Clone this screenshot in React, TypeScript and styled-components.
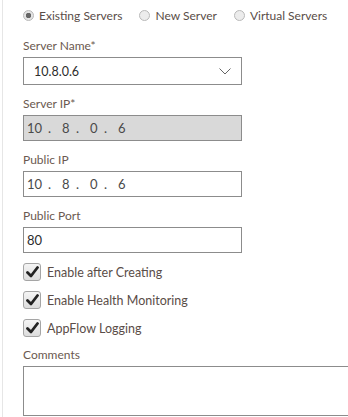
import React from 'react';
import styled, { createGlobalStyle } from 'styled-components';

const Global = createGlobalStyle`
  html, body { margin: 0; padding: 0; background: #fff; }
  body { font-family: Lato, "Open Sans", sans-serif; }
`;

const Page = styled.div`
  margin-left: 2px;
  border-left: 1px solid #e6e6e6;
  padding-left: 20px;
  height: 417px;
  box-sizing: border-box;
  overflow: hidden;
`;

const RadioRow = styled.div`
  display: flex;
  align-items: center;
  height: 30px;
  gap: 17px;
`;

const RadioItem = styled.label`
  display: flex;
  align-items: center;
  gap: 5px;
  font-size: 12px;
  color: #5a4d48;
`;

const RadioDot = styled.span<{ checked?: boolean }>`
  width: 11px;
  height: 11px;
  border-radius: 50%;
  border: 1px solid #b8b8b8;
  background: radial-gradient(circle, ${p => (p.checked ? '#666 0 2.5px, #e4e4e4 3px' : '#ececec 0')});
  box-sizing: border-box;
`;

const Field = styled.div<{ gapTop?: number }>`
  margin-top: ${p => p.gapTop ?? 11}px;
`;

const Label = styled.div`
  font-size: 12px;
  color: #6b5950;
  line-height: 15px;
  margin-bottom: 4px;
`;

const Box = styled.div<{ disabled?: boolean; wide?: boolean; tall?: boolean }>`
  width: ${p => (p.wide ? '340px' : '219px')};
  height: ${p => (p.tall ? '50px' : '26px')};
  box-sizing: border-box;
  border: 1px solid #8c8c8c;
  background: ${p => (p.disabled ? '#d9d9d9' : '#fff')};
  display: flex;
  align-items: center;
  font-size: 13px;
  color: #4a4a4a;
`;

const SelectBox = styled(Box)`
  height: 28px;
  padding: 0 10px;
  justify-content: space-between;
  color: #2d2d2d;
  font-size: 12.5px;
`;

const Seg = styled.span`
  width: 14px;
  &:first-child { padding-left: 3px; width: 21px; }
`;

const Dot = styled.span`
  width: 14px;
`;

const PortText = styled.span`
  padding-left: 3px;
  color: #2d2d2d;
`;

const Checks = styled.div`
  margin-top: 10px;
  display: flex;
  flex-direction: column;
  gap: 10px;
`;

const CheckRow = styled.label`
  display: flex;
  align-items: center;
  gap: 6px;
  font-size: 12.5px;
  color: #5a4d48;
`;

const CheckBox = styled.span`
  width: 18px;
  height: 18px;
  box-sizing: border-box;
  border: 1px solid #a5a5a5;
  border-radius: 3px;
  background: linear-gradient(#f4f4f4, #dcdcdc);
  display: flex;
  align-items: center;
  justify-content: center;
`;

const Check = () => (
  <svg width="13" height="12" viewBox="0 0 13 12">
    <path d="M1.5 6.5 L5 10 L11.5 1.5" stroke="#222" strokeWidth="2.8" fill="none" strokeLinecap="round" strokeLinejoin="round" />
  </svg>
);

const Chevron = () => (
  <svg width="12" height="7" viewBox="0 0 12 7">
    <path d="M0.5 0.5 L6 6 L11.5 0.5" stroke="#666" strokeWidth="1" fill="none" />
  </svg>
);

const IpValue = ({ parts }: { parts: string[] }) => (
  <>
    {parts.map((p, i) => (
      <React.Fragment key={i}>
        <Seg>{p}</Seg>
        {i < parts.length - 1 && <Dot>.</Dot>}
      </React.Fragment>
    ))}
  </>
);

export default function App() {
  const ip = ['10', '8', '0', '6'];
  return (
    <>
      <Global />
      <Page>
        <RadioRow>
          <RadioItem><RadioDot checked />Existing Servers</RadioItem>
          <RadioItem><RadioDot />New Server</RadioItem>
          <RadioItem><RadioDot />Virtual Servers</RadioItem>
        </RadioRow>
        <Field gapTop={8}>
          <Label>Server Name*</Label>
          <SelectBox>
            <span>10.8.0.6</span>
            <Chevron />
          </SelectBox>
        </Field>
        <Field>
          <Label>Server IP*</Label>
          <Box disabled><IpValue parts={ip} /></Box>
        </Field>
        <Field>
          <Label>Public IP</Label>
          <Box><IpValue parts={ip} /></Box>
        </Field>
        <Field>
          <Label>Public Port</Label>
          <Box><PortText>80</PortText></Box>
        </Field>
        <Checks>
          <CheckRow><CheckBox><Check /></CheckBox>Enable after Creating</CheckRow>
          <CheckRow><CheckBox><Check /></CheckBox>Enable Health Monitoring</CheckRow>
          <CheckRow><CheckBox><Check /></CheckBox>AppFlow Logging</CheckRow>
        </Checks>
        <Field gapTop={10}>
          <Label>Comments</Label>
          <Box wide tall />
        </Field>
      </Page>
    </>
  );
}
